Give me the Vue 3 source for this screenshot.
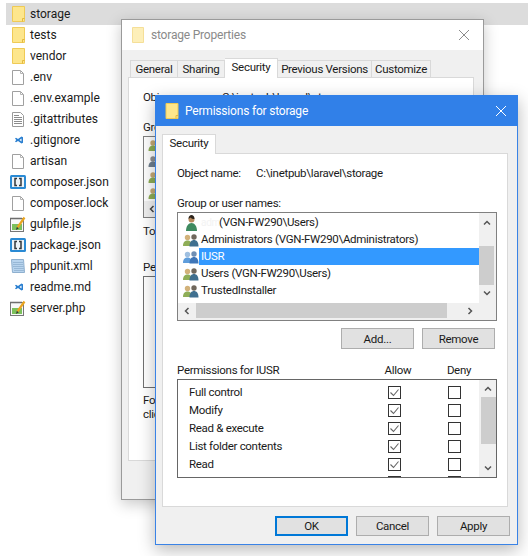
<template>
  <div class="desktop">
    <ul class="tree">
      <li v-for="file in files" :key="file.name" class="file" :class="{ active: file.active }">
        <svg class="file-icon" viewBox="0 0 16 16" width="16" height="16">
          <template v-if="file.icon === 'folder'">
            <path d="M2.5.5h12v15h-12z" fill="#fde68c" stroke="#efca55" />
            <path d="M12.5 15.500v-3h2" fill="none" stroke="#e3b93f" />
          </template>
          <template v-else-if="file.icon === 'blank'">
            <path d="M2.500 1.500h8l3 3v11h-11z" fill="#fff" stroke="#a0a0a0" />
            <path d="M10.500 1.500v3h3" fill="none" stroke="#b5b5b5" />
          </template>
          <template v-else-if="file.icon === 'text'">
            <path d="M2.500 1.500h8l3 3v11h-11z" fill="#fff" stroke="#9a9a9a" />
            <path d="M4 4.500h5M4 6.500h8M4 8.500h8M4 10.500h8M4 12.500h8" stroke="#8c8c8c" />
          </template>
          <template v-else-if="file.icon === 'code'">
            <path d="M5 6.500 6 5.800 8 7 11.500 4.500 13 5.200V10.800L11.500 11.500 8 9 6 10.200 5 9.500 6.300 8Z" fill="#2a7fd0" />
            <path d="M11.500 6.500 9.500 8 11.500 9.500Z" fill="#fff" />
          </template>
          <template v-else-if="file.icon === 'json'">
            <rect x="0" y="1" width="16" height="14" rx="1.500" fill="#2a8ad4" />
            <rect x="2" y="3" width="12" height="10" fill="#eef3f7" />
            <path d="M7 4.500H5v7h2M9 4.500h2v7H9" fill="none" stroke="#33383d" stroke-width="1.500" />
          </template>
          <template v-else-if="file.icon === 'script'">
            <rect x=".5" y="2.500" width="13" height="13" fill="#f8f8f8" stroke="#777" />
            <rect x="2" y="8" width="10" height="6" fill="#7cc05c" />
            <path d="M1 1.500v2M3 1.500v2M5 1.500v2M7 1.500v2M9 1.500v2M11 1.500v2" stroke="#666" />
            <path d="M7.500 11.500 14.500 1.500" stroke="#eaa51f" stroke-width="2.200" />
            <path d="M6 14l.8-3 2 1.300z" fill="#333" />
          </template>
          <template v-else>
            <path d="M1.500 1.500h12l1 13h-12z" fill="#b8d4ee" stroke="#8fb0cf" />
            <path d="M3 4.500h10M3 6.500h10M3 8.500h11M4 10.500h10M4 12.500h10" stroke="#98b8d6" />
          </template>
        </svg>
        <span>{{ file.name }}</span>
      </li>
    </ul>

    <section class="window back">
      <header class="back-title">
        <svg class="title-folder faded" viewBox="0 0 16 16" width="16" height="16">
          <path d="M2.500.5h11v15h-11z" fill="#fde68c" stroke="#efca55" />
        </svg>
        <span>storage Properties</span>
        <svg class="close" viewBox="0 0 12 12" width="12" height="12">
          <path d="M1 1l10 10M11 1L1 11" stroke="#8c8c8c" />
        </svg>
      </header>
      <div class="back-body">
        <div class="tabs back-tabs">
          <span class="tab">General</span>
          <span class="tab">Sharing</span>
          <span class="tab selected">Security</span>
          <span class="tab">Previous Versions</span>
          <span class="tab">Customize</span>
        </div>
        <div class="back-page">
          <p class="object"><span class="object-name">Obje</span><span>C:\inetpub\laravel\storage</span></p>
          <p class="label">Gro</p>
          <div class="back-list">
            <div v-for="n in 4" :key="n" class="back-row">
              <svg viewBox="0 0 16 16" width="16" height="16">
                <circle cx="5" cy="6" r="2.700" :fill="n === 2 ? '#8f8f8f' : '#c6ab76'" />
                <path d="M.5 14c0-4 2-5.500 4.500-5.500S9.500 10 9.500 14z" :fill="n === 2 ? '#6f7f8f' : '#8fae57'" />
              </svg>
            </div>
            <div class="back-hbar">
              <svg viewBox="0 0 8 8" width="8" height="8"><path d="M5.500 1 2.500 4l3 3" fill="none" stroke="#444" stroke-width="1.500" /></svg>
            </div>
          </div>
          <p class="label back-to">To</p>
          <p class="label back-pe">Pe</p>
          <div class="back-perms"></div>
          <p class="back-note">Fo<br />clic</p>
        </div>
      </div>
    </section>

    <section class="window front">
      <header class="front-title">
        <svg class="title-folder" viewBox="0 0 16 16" width="16" height="16">
          <path d="M2 .5h12v15H2z" fill="#fde68c" stroke="#efca55" />
          <path d="M12 15.500v-3h2" fill="none" stroke="#e3b93f" />
        </svg>
        <span>Permissions for storage</span>
        <svg class="close" viewBox="0 0 12 12" width="12" height="12">
          <path d="M1 1l10 10M11 1L1 11" stroke="#fff" />
        </svg>
      </header>
      <div class="front-body">
        <div class="tabs inner">
          <span class="tab selected">Security</span>
        </div>
        <div class="page">
          <p class="object"><span class="object-name">Object name:</span><span>C:\inetpub\laravel\storage</span></p>
          <p class="label">Group or user names:</p>
          <div class="users">
            <div class="users-view">
              <ul class="user-list">
                <li v-for="user in users" :key="user.label" class="user" :class="{ picked: user.picked }">
                  <svg viewBox="0 0 16 16" width="16" height="16" class="user-icon">
                    <template v-if="user.single">
                      <circle cx="8.500" cy="4.500" r="3" fill="#b98a5e" />
                      <path d="M5.500 4c0-3 1.500-4 3-4s3 1 3 4c-2 0-3-.5-4-1.500z" fill="#2d241c" />
                      <path d="M3 16c0-5 2.500-8 5.500-8s5.500 3 5.500 8z" fill="#3f8a60" />
                    </template>
                    <template v-else>
                      <circle cx="4.500" cy="5.500" r="2.700" :fill="user.picked ? '#9fbfe0' : '#d2b27a'" />
                      <path d="M0 14c0-4 2-5.500 4.500-5.500S9 10 9 14z" :fill="user.picked ? '#5f9ddb' : '#8fae57'" />
                      <circle cx="11" cy="5" r="2.700" :fill="user.picked ? '#6f8fb5' : '#6f675c'" />
                      <path d="M6.500 14.500c0-4.500 2-6.500 4.500-6.500s4.500 2 4.500 6.500z" :fill="user.picked ? '#3f76b8' : '#3f6f8f'" />
                    </template>
                  </svg>
                  <span class="user-name">
                    <span v-if="user.single" class="ghost">adm</span>{{ user.label }}
                  </span>
                </li>
              </ul>
              <div class="hbar">
                <svg class="arrow-left" viewBox="0 0 8 8" width="8" height="8"><path d="M5.500 1 2.500 4l3 3" fill="none" stroke="#555" stroke-width="1.500" /></svg>
                <div class="hthumb"></div>
                <svg class="arrow-right" viewBox="0 0 8 8" width="8" height="8"><path d="M2.500 1l3 3-3 3" fill="none" stroke="#555" stroke-width="1.500" /></svg>
              </div>
            </div>
            <div class="vbar users-bar">
              <svg viewBox="0 0 8 8" width="8" height="8"><path d="M1 5.500 4 2.500l3 3" fill="none" stroke="#555" stroke-width="1.500" /></svg>
              <div class="vthumb"></div>
              <svg viewBox="0 0 8 8" width="8" height="8"><path d="M1 2.500 4 5.500l3-3" fill="none" stroke="#555" stroke-width="1.500" /></svg>
            </div>
          </div>
          <div class="buttons-row">
            <button class="btn">Add...</button>
            <button class="btn">Remove</button>
          </div>
          <div class="perm-head">
            <span class="perm-title">Permissions for IUSR</span>
            <span class="perm-col">Allow</span>
            <span class="perm-col">Deny</span>
          </div>
          <div class="perms">
            <ul class="perm-list">
              <li v-for="perm in perms" :key="perm" class="perm">
                <span class="perm-name">{{ perm }}</span>
                <span class="check">
                  <svg viewBox="0 0 13 13" width="13" height="13"><path d="M2.500 6.500l3 3 5-6" fill="none" stroke="#666" stroke-width="1.100" /></svg>
                </span>
                <span class="check"></span>
              </li>
            </ul>
            <div class="vbar perms-bar">
              <svg viewBox="0 0 8 8" width="8" height="8"><path d="M1 5.500 4 2.500l3 3" fill="none" stroke="#555" stroke-width="1.500" /></svg>
              <div class="vthumb"></div>
              <svg viewBox="0 0 8 8" width="8" height="8"><path d="M1 2.500 4 5.500l3-3" fill="none" stroke="#555" stroke-width="1.500" /></svg>
            </div>
          </div>
        </div>
        <div class="actions">
          <button class="btn primary">OK</button>
          <button class="btn">Cancel</button>
          <button class="btn">Apply</button>
        </div>
      </div>
    </section>
  </div>
</template>

<script setup>
const files = [
  { name: "storage", icon: "folder", active: true },
  { name: "tests", icon: "folder" },
  { name: "vendor", icon: "folder" },
  { name: ".env", icon: "blank" },
  { name: ".env.example", icon: "blank" },
  { name: ".gitattributes", icon: "text" },
  { name: ".gitignore", icon: "code" },
  { name: "artisan", icon: "blank" },
  { name: "composer.json", icon: "json" },
  { name: "composer.lock", icon: "blank" },
  { name: "gulpfile.js", icon: "script" },
  { name: "package.json", icon: "json" },
  { name: "phpunit.xml", icon: "xml" },
  { name: "readme.md", icon: "code" },
  { name: "server.php", icon: "script" },
];

const users = [
  { label: "(VGN-FW290\\Users)", single: true },
  { label: "Administrators (VGN-FW290\\Administrators)" },
  { label: "IUSR", picked: true },
  { label: "Users (VGN-FW290\\Users)" },
  { label: "TrustedInstaller" },
];

const perms = ["Full control", "Modify", "Read & execute", "List folder contents", "Read", ""];
</script>

<style scoped>
.desktop {
  position: relative;
  width: 528px;
  height: 556px;
  overflow: hidden;
  background: #fff;
  font-family: Roboto, "Liberation Sans", sans-serif;
  font-size: 11.5px;
  letter-spacing: -0.3px;
  color: #1a1a1a;
}

p,
ul {
  margin: 0;
  padding: 0;
  list-style: none;
}

.tree {
  display: flex;
  flex-direction: column;
  padding-top: 3px;
  letter-spacing: 0;
}

.file {
  display: flex;
  align-items: center;
  gap: 4px;
  height: 21px;
  padding-left: 10px;
  font-size: 12px;
}

.file.active {
  height: 22px;
  margin: 0 0 -1px 6px;
  padding-left: 4px;
  background: #dcdcdc;
}

.file-icon {
  flex: none;
}

.window {
  position: absolute;
  box-sizing: border-box;
  background: #f0f0f0;
}

.back {
  left: 121px;
  top: 19px;
  width: 363px;
  height: 481px;
  border: 1px solid #9a9a9a;
  box-shadow: 0 4px 14px rgba(0, 0, 0, 0.22);
}

.back-title {
  display: flex;
  align-items: center;
  height: 30px;
  padding: 0 13px 0 8px;
  background: #fff;
  color: #8a8a8a;
  font-size: 12px;
  letter-spacing: -0.2px;
}

.title-folder {
  flex: none;
  margin-right: 5px;
}

.faded {
  opacity: 0.6;
}

.close {
  margin-left: auto;
}

.back-body {
  padding: 8px 0 0 6px;
}

.tabs {
  display: flex;
  height: 19px;
  align-items: flex-end;
}

.back-tabs {
  display: grid;
  grid-template-columns: 48px 47px 53px 94px 59px;
  margin-left: 2px;
}

.tab {
  box-sizing: border-box;
  height: 17px;
  line-height: 16px;
  text-align: center;
  border: 1px solid #d9d9d9;
  border-bottom: 0;
  background: #f0f0f0;
}

.tab + .tab {
  border-left: 0;
}

.tab.selected {
  position: relative;
  z-index: 1;
  height: 20px;
  margin-bottom: -1px;
  line-height: 17px;
  background: #fff;
}

.back-page {
  box-sizing: border-box;
  width: 346px;
  height: 384px;
  padding: 11px 14px 0;
  background: #fff;
  border: 1px solid #d9d9d9;
}

.object {
  display: flex;
  height: 16px;
  line-height: 16px;
}

.object-name {
  width: 79px;
}

.label {
  height: 16px;
  margin-top: 14px;
  line-height: 16px;
}

.back-list {
  display: flex;
  flex-direction: column;
  box-sizing: border-box;
  width: 320px;
  height: 82px;
  margin-top: 1px;
  border: 1px solid #808080;
}

.back-row {
  display: flex;
  align-items: center;
  height: 16px;
  padding-left: 4px;
}

.back-hbar {
  display: flex;
  align-items: center;
  height: 16px;
  margin-top: auto;
  padding-left: 4px;
  background: #f0f0f0;
}

.label.back-to {
  margin-top: 5px;
}

.label.back-pe {
  margin-top: 20px;
}

.back-perms {
  box-sizing: border-box;
  width: 320px;
  height: 112px;
  margin-top: 1px;
  border: 1px solid #707070;
}

.back-note {
  margin-top: 5px;
  line-height: 14px;
}

.front {
  left: 155px;
  top: 95px;
  width: 363px;
  height: 450px;
  border: 1px solid #3a83e6;
  box-shadow: 0 5px 16px rgba(0, 0, 0, 0.28);
}

.front-title {
  display: flex;
  align-items: center;
  height: 31px;
  margin: -1px -1px 0;
  padding: 0 11px 0 9px;
  background: #3180e8;
  color: #fff;
  font-size: 12px;
  letter-spacing: -0.2px;
}

.front-body {
  padding: 7px 0 0 6px;
}

.tabs.inner {
  height: 20px;
}

.inner .tab {
  width: 54px;
}

.page {
  box-sizing: border-box;
  width: 346px;
  height: 354px;
  padding: 11px 14px 0;
  background: #fff;
  border: 1px solid #d9d9d9;
}

.users {
  display: flex;
  box-sizing: border-box;
  width: 320px;
  height: 109px;
  margin-top: 1px;
  border: 1px solid #808080;
}

.users-view {
  display: flex;
  flex-direction: column;
  flex: 1;
  min-width: 0;
}

.user-list {
  flex: 1;
  padding-top: 1px;
}

.user {
  display: flex;
  align-items: center;
  height: 17px;
  padding-left: 5px;
}

.user-icon {
  flex: none;
}

.user-name {
  flex: 1;
  height: 17px;
  padding-left: 2px;
  line-height: 17px;
  white-space: nowrap;
}

.ghost {
  display: inline-block;
  width: 18px;
  color: #f3f3f3;
  font-size: 10px;
}

.user.picked .user-name {
  background: #3399ff;
  color: #fff;
}

.hbar {
  display: flex;
  align-items: center;
  height: 17px;
  padding-bottom: 2px;
  box-sizing: border-box;
  background: #f0f0f0;
}

.arrow-left {
  margin: 0 5px;
}

.hthumb {
  flex: none;
  width: 251px;
  height: 15px;
  background: #cdcdcd;
}

.arrow-right {
  margin-left: 19px;
}

.vbar {
  flex: none;
  display: flex;
  flex-direction: column;
  align-items: center;
  box-sizing: border-box;
  width: 17px;
  background: #f0f0f0;
}

.vthumb {
  flex: none;
  width: 15px;
  background: #cdcdcd;
}

.users-bar {
  padding: 6px 2px 0 0;
}

.users-bar .vthumb {
  height: 39px;
  margin: 19px 0 4px;
}

.perms-bar {
  padding: 5px 0 0 1px;
}

.perms-bar .vthumb {
  height: 47px;
  margin: 4px 0 20px;
}

.buttons-row {
  display: flex;
  justify-content: flex-end;
  gap: 8px;
  width: 318px;
  margin-top: 7px;
}

.btn {
  box-sizing: border-box;
  width: 73px;
  height: 21px;
  padding: 0;
  font: inherit;
  letter-spacing: inherit;
  color: inherit;
  background: #e1e1e1;
  border: 1px solid #adadad;
}

.btn.primary {
  border: 2px solid #0078d7;
}

.perm-head {
  display: flex;
  align-items: center;
  gap: 11px;
  width: 320px;
  height: 15px;
  margin-top: 13px;
}

.perm-title {
  flex: 1;
}

.perm-col {
  width: 50px;
  text-align: center;
}

.perm-col:last-child {
  margin-right: 13px;
}

.perms {
  display: flex;
  box-sizing: border-box;
  width: 320px;
  height: 99px;
  margin-top: 2px;
  border: 1px solid #666;
  overflow: hidden;
}

.perm-list {
  flex: 1;
  padding-top: 3px;
}

.perm {
  display: flex;
  align-items: center;
  height: 18px;
  padding-left: 11px;
}

.perm-name {
  flex: 1;
}

.check {
  flex: none;
  display: flex;
  align-items: center;
  justify-content: center;
  box-sizing: border-box;
  width: 13px;
  height: 13px;
  margin-right: 47px;
  border: 1px solid #333;
  background: #fff;
}

.check:last-child {
  margin-right: 18px;
}

.check svg {
  flex: none;
}

.actions {
  display: flex;
  justify-content: flex-end;
  gap: 8px;
  width: 348px;
  margin-top: 9px;
}

.actions .btn {
  height: 20px;
}
</style>
